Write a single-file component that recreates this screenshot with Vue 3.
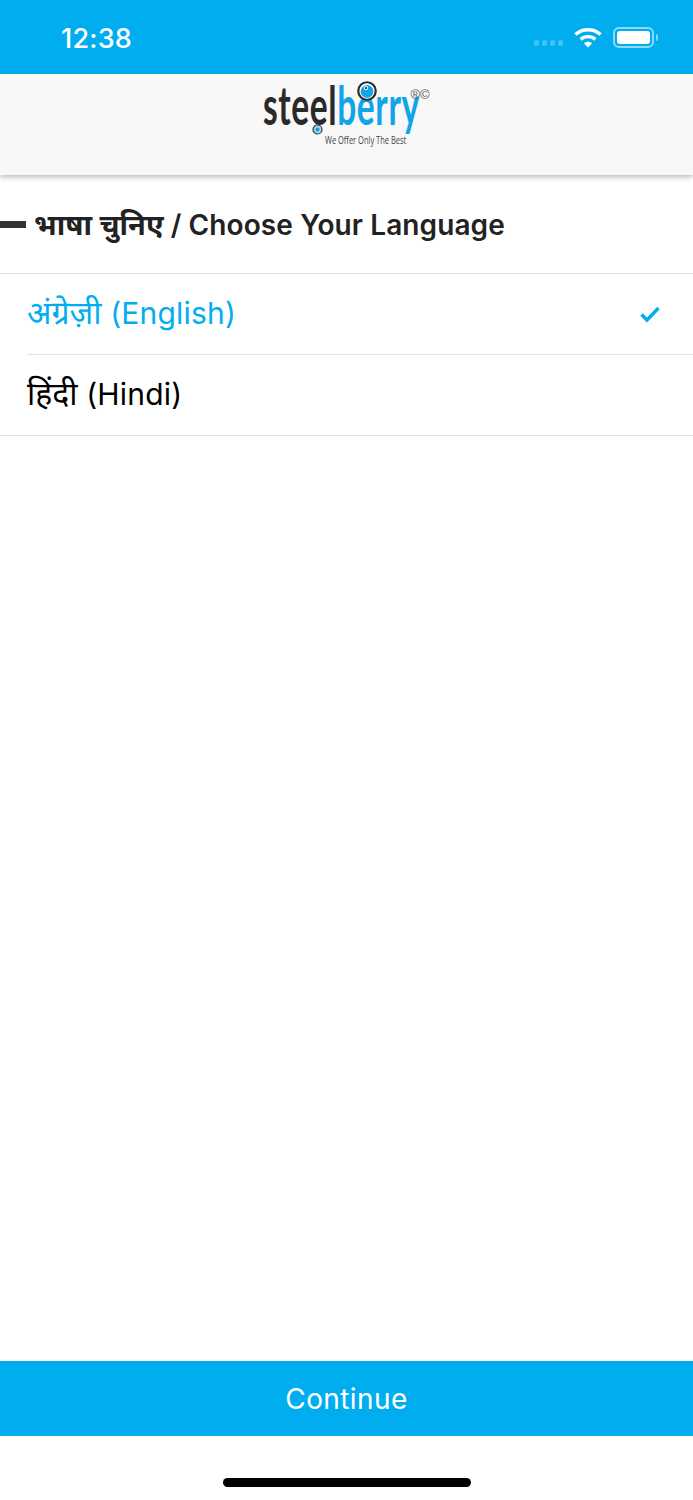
<template>
  <div class="screen">
    <header class="status-bar">
      <span class="time">12:38</span>
      <div class="status-icons">
        <div class="signal">
          <i v-for="n in 4" :key="n"></i>
        </div>
        <svg class="wifi" width="28" height="21" viewBox="0 0 28 21">
          <path d="M1.5 7.5C8.5 1.2 19.5 1.2 26.5 7.5" fill="none" stroke="#fff" stroke-width="3.4" />
          <path d="M6.6 12.4C10.8 8.7 17.2 8.7 21.4 12.4" fill="none" stroke="#fff" stroke-width="3.4" />
          <path d="M10 16.2C12.3 14.2 15.7 14.2 18 16.2L14 20.4Z" fill="#fff" />
        </svg>
        <div class="battery">
          <div class="battery-body"><div class="battery-fill"></div></div>
          <div class="battery-cap"></div>
        </div>
      </div>
    </header>

    <div class="brand-bar">
      <div class="logo">
        <div class="wordmark"><span class="steel">steel</span><span class="berry">berry</span></div>
        <div class="tagline">We Offer Only The Best</div>
        <svg class="eye" width="20" height="20" viewBox="0 0 22 22">
          <circle cx="11" cy="11" r="9.6" fill="#fff" stroke="#2b2a2a" stroke-width="2.4" />
          <circle cx="11" cy="11.5" r="7" fill="#10a5e6" />
          <circle cx="9.8" cy="7.8" r="2.3" fill="#fff" />
          <circle cx="9.8" cy="7.8" r="1.2" fill="#222" />
        </svg>
        <svg class="eye-small" width="11" height="11" viewBox="0 0 11 11">
          <circle cx="5.5" cy="5.5" r="4.5" fill="#9fd8f2" stroke="#333" stroke-width="1.2" />
          <circle cx="5.5" cy="5.5" r="2" fill="#1a9ad8" />
        </svg>
        <span class="marks">®©</span>
      </div>
    </div>

    <main class="content">
      <div class="title-row">
        <div class="dash"></div>
        <h1 class="title"><span class="hi">भाषा चुनिए</span> / Choose Your Language</h1>
      </div>

      <ul class="languages">
        <li
          v-for="lang in languages"
          :key="lang.en"
          class="language"
          :class="{ selected: lang.selected }"
        >
          <div class="language-inner">
            <span class="language-name"><span class="hi">{{ lang.hi }}</span> ({{ lang.en }})</span>
            <svg v-if="lang.selected" class="check" width="22" height="18" viewBox="0 0 22 18">
              <path d="M2.5 9.5L8 15L19.5 3" fill="none" stroke="#00aeef" stroke-width="3.4" />
            </svg>
          </div>
        </li>
      </ul>
    </main>

    <button class="continue">Continue</button>

    <div class="home-area">
      <div class="home-indicator"></div>
    </div>
  </div>
</template>

<script setup>
const languages = [
  { hi: "अंग्रेज़ी", en: "English", selected: true },
  { hi: "हिंदी", en: "Hindi", selected: false },
];
</script>

<style>
body {
  margin: 0;
  background: #fff;
}
</style>

<style scoped>
.screen {
  width: 693px;
  height: 1500px;
  display: flex;
  flex-direction: column;
  font-family: Inter, "Noto Sans", sans-serif;
  background: #fff;
  overflow: hidden;
}

.hi {
  font-family: "Noto Sans", sans-serif;
  letter-spacing: 0;
}

.status-bar {
  height: 74px;
  flex: none;
  background: #00aeef;
  display: flex;
  align-items: center;
  justify-content: space-between;
  padding: 2px 35px 0 61px;
  box-sizing: border-box;
  color: #fff;
}

.time {
  font-family: Inter, sans-serif;
  font-size: 27px;
  font-weight: 500;
  letter-spacing: 0.2px;
}

.status-icons {
  display: flex;
  align-items: center;
  margin-top: -2px;
}

.signal {
  display: flex;
  gap: 2.5px;
  margin: 12px 11px 0 0;
}

.signal i {
  width: 5.5px;
  height: 6px;
  border-radius: 2px;
  background: rgba(255, 255, 255, 0.25);
}

.wifi {
  margin-right: 11px;
}

.battery {
  display: flex;
  align-items: center;
  gap: 2px;
}

.battery-body {
  width: 41px;
  height: 21px;
  box-sizing: border-box;
  border: 2px solid rgba(255, 255, 255, 0.55);
  border-radius: 6px;
  padding: 2px;
}

.battery-fill {
  height: 100%;
  background: #fff;
  border-radius: 3px;
}

.battery-cap {
  width: 2px;
  height: 7px;
  background: rgba(255, 255, 255, 0.5);
  border-radius: 0 2px 2px 0;
}

.brand-bar {
  height: 101px;
  flex: none;
  background: #f8f8f8;
  display: flex;
  justify-content: center;
  box-shadow: 0 2px 5px rgba(0, 0, 0, 0.28);
  position: relative;
}

.logo {
  position: relative;
  width: 170px;
  height: 72px;
  margin-left: 2px;
}

.wordmark {
  position: absolute;
  left: 0;
  top: 26px;
  font-family: "Lato", sans-serif;
  font-size: 54px;
  font-weight: 700;
  line-height: 10px;
  letter-spacing: 1px;
  white-space: nowrap;
  transform: scaleX(0.62);
  transform-origin: left top;
}

.steel {
  color: #2b2a2a;
}

.berry {
  color: #10a5e6;
}

.tagline {
  position: absolute;
  left: 62px;
  top: 59px;
  font-family: "Open Sans", sans-serif;
  font-size: 11px;
  line-height: 14px;
  color: #444;
  white-space: nowrap;
  transform: scaleX(0.68);
  transform-origin: left top;
}

.eye {
  position: absolute;
  left: 94px;
  top: 7px;
}

.eye-small {
  position: absolute;
  left: 49px;
  top: 50px;
}

.marks {
  position: absolute;
  left: 148px;
  top: 16px;
  font-family: "Liberation Sans", sans-serif;
  font-size: 13px;
  line-height: 10px;
  color: #555;
}

.content {
  flex: 1;
}

.title-row {
  height: 98px;
  display: flex;
  align-items: center;
  box-sizing: border-box;
}

.dash {
  width: 26px;
  height: 7px;
  background: #333;
  margin-right: 8px;
}

.title {
  margin: -2px 0 0;
  font-size: 28px;
  font-weight: 600;
  letter-spacing: 0.1px;
  color: #222;
}

.title .hi {
  font-size: 29px;
  font-weight: 700;
}

.languages {
  list-style: none;
  margin: 0;
  padding: 0;
  border-top: 1px solid #e2e2e2;
}

.language {
  margin-left: 27px;
  font-size: 30px;
  letter-spacing: 0.2px;
  color: #000;
}

.language .hi {
  font-size: 32px;
}

.language-name {
  margin-top: -5px;
}

.language-inner {
  height: 80px;
  display: flex;
  align-items: center;
  justify-content: space-between;
  padding-right: 32px;
  border-bottom: 1px solid #e2e2e2;
}

.language.selected {
  color: #00aeef;
}

.language:last-child {
  margin-left: 0;
}

.language:last-child .language-inner {
  padding-left: 27px;
}

.check {
  flex: none;
}

.continue {
  height: 75px;
  flex: none;
  border: none;
  background: #00aeef;
  color: #fff;
  font-family: Inter, sans-serif;
  font-size: 28px;
  letter-spacing: 0.4px;
  padding: 0;
}

.home-area {
  height: 64px;
  flex: none;
  display: flex;
  justify-content: center;
  padding-top: 42px;
  box-sizing: border-box;
}

.home-indicator {
  width: 248px;
  height: 9px;
  border-radius: 5px;
  background: #000;
}
</style>
